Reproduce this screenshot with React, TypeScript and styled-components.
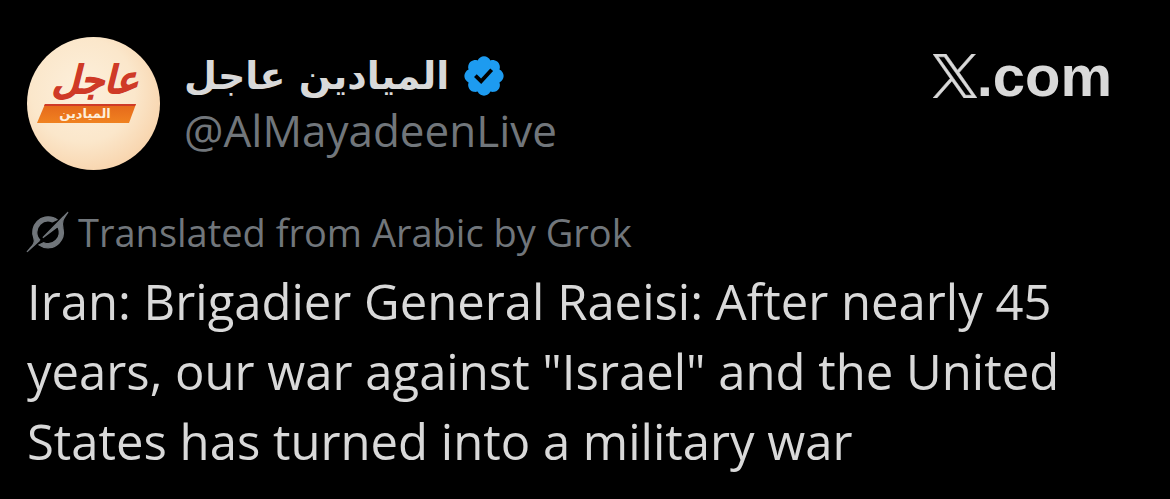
import React from "react";
import styled, { createGlobalStyle } from "styled-components";

const GlobalStyle = createGlobalStyle`
  * { box-sizing: border-box; }
  body {
    margin: 0;
    background: #000;
    color: #d9d9d9;
    font-family: "Open Sans", "DejaVu Sans", sans-serif;
  }
`;

const Post = styled.article`
  padding: 37px 28px 20px 27px;
`;

const Header = styled.header`
  display: flex;
  align-items: flex-start;
  gap: 24px;
  padding-right: 30px;
`;

const Avatar = styled.svg`
  flex: none;
  width: 133px;
  height: 133px;
  border-radius: 50%;
`;

const Author = styled.div`
  flex: 1;
  min-width: 0;
  padding-top: 12px;
`;

const NameRow = styled.div`
  display: flex;
  align-items: center;
  gap: 12px;
  height: 54px;
`;

const Name = styled.h1`
  margin: 0;
  font: 700 38px/54px "DejaVu Sans", sans-serif;
  white-space: nowrap;
`;

const Badge = styled.svg`
  flex: none;
  width: 46px;
  height: 46px;
  fill: #1d9bf0;
`;

const Handle = styled.a`
  display: block;
  color: #71767b;
  font-size: 44px;
  line-height: 54px;
  text-decoration: none;
`;

const Site = styled.a`
  display: flex;
  align-items: flex-end;
  padding-top: 17px;
  color: inherit;
  font: 700 58px/44px "Liberation Sans", sans-serif;
  text-decoration: none;
`;

const XMark = styled.svg`
  width: 44px;
  height: 44px;
  fill: currentColor;
  stroke: currentColor;
  stroke-width: 16;
`;

const Translation = styled.div`
  display: flex;
  align-items: center;
  gap: 10px;
  margin-top: 36px;
  color: #71767b;
  font-size: 38px;
  line-height: 52px;
`;

const GrokMark = styled.svg`
  width: 41px;
  height: 40px;
  fill: currentColor;
  stroke: currentColor;
  stroke-width: 1;
  overflow: visible;
`;

const Body = styled.p`
  margin: 8px 0 0;
  font-size: 49px;
  line-height: 70px;
`;

export default function App() {
  return (
    <>
      <GlobalStyle />
      <Post>
        <Header>
          <Avatar viewBox="0 0 133 133" role="img" aria-label="الميادين عاجل">
            <defs>
              <radialGradient id="cream" cx="42%" cy="40%" r="65%">
                <stop offset="0" stopColor="#fdf0dc" />
                <stop offset="0.6" stopColor="#fbe7cb" />
                <stop offset="1" stopColor="#f8d3ab" />
              </radialGradient>
              <linearGradient id="band" x1="0" y1="0" x2="0" y2="1">
                <stop offset="0" stopColor="#e5671b" />
                <stop offset="1" stopColor="#f08220" />
              </linearGradient>
            </defs>
            <rect width="133" height="133" fill="url(#cream)" />
            <text x="68" y="56" textAnchor="middle" fill="#cf3a27" stroke="#cf3a27" strokeWidth="1" fontFamily="DejaVu Sans" fontWeight="700" fontStyle="italic" fontSize="38">عاجل</text>
            <path d="M18 67H109L102 86H10Z" fill="url(#band)" />
            <path d="M18 67H109L108 69H17Z" fill="#cf3a27" />
            <text x="58" y="81" textAnchor="middle" fill="#fdeedb" fontFamily="DejaVu Sans" fontWeight="700" fontSize="13">الميادين</text>
          </Avatar>
          <Author>
            <NameRow>
              <Name dir="rtl" lang="ar">الميادين عاجل</Name>
              <Badge viewBox="0 0 22 22" role="img" aria-label="Verified account">
                <path d="M20.396 11c-.018-.646-.215-1.275-.57-1.816-.354-.54-.852-.972-1.438-1.246.223-.607.27-1.264.14-1.897-.131-.634-.437-1.218-.882-1.687-.47-.445-1.053-.75-1.687-.882-.633-.13-1.29-.083-1.897.14-.273-.587-.704-1.086-1.245-1.44S11.647 1.62 11 1.604c-.646.017-1.273.213-1.813.568s-.969.854-1.24 1.44c-.608-.223-1.267-.272-1.902-.14-.635.13-1.22.436-1.69.882-.445.47-.749 1.055-.878 1.688-.13.633-.08 1.29.144 1.896-.587.274-1.087.705-1.443 1.245-.356.54-.555 1.17-.574 1.817.02.647.218 1.276.574 1.817.356.54.856.972 1.443 1.245-.224.606-.274 1.263-.144 1.896.13.634.433 1.218.877 1.688.47.443 1.054.747 1.687.878.633.132 1.29.084 1.897-.136.274.586.705 1.084 1.246 1.439.54.354 1.17.551 1.816.569.647-.016 1.276-.213 1.817-.567s.972-.854 1.245-1.44c.604.239 1.266.296 1.903.164.636-.132 1.22-.447 1.68-.907.46-.46.776-1.044.908-1.681s.075-1.299-.165-1.903c.586-.274 1.084-.705 1.439-1.246.354-.54.551-1.17.569-1.816zM9.662 14.85l-3.429-3.428 1.293-1.302 2.072 2.072 4.4-4.794 1.347 1.246z" />
              </Badge>
            </NameRow>
            <Handle href="#profile">@AlMayadeenLive</Handle>
          </Author>
          <Site href="#home">
            <XMark viewBox="0 0 1200 1227" preserveAspectRatio="none" role="img" aria-label="X">
              <path d="M714.163 519.284L1160.89 0H1055.03L667.137 450.887L357.328 0H0L468.492 681.821L0 1226.37H105.866L515.491 750.218L842.672 1226.37H1200L714.137 519.284H714.163ZM569.165 687.828L521.697 619.934L144.011 79.6944H306.615L611.412 515.685L658.88 583.579L1055.08 1150.3H892.476L569.165 687.854V687.828Z" />
            </XMark>
            <span>.com</span>
          </Site>
        </Header>
        <Translation>
          <GrokMark viewBox="0 0 33 32" aria-hidden="true">
            <path d="M12.745 20.54l10.97-8.19c.539-.4 1.307-.244 1.564.38 1.349 3.288.746 7.241-1.938 9.955-2.683 2.714-6.417 3.31-9.83 1.954l-3.728 1.745c5.347 3.697 11.84 2.782 15.898-1.324 3.219-3.255 4.216-7.692 3.284-11.693l.008.009c-1.351-5.878.332-8.227 3.782-13.031L33 0l-4.54 4.59v-.014L12.743 20.544m-2.263 1.987c-3.837-3.707-3.175-9.446.1-12.755 2.42-2.449 6.388-3.448 9.852-1.979l3.72-1.737c-.67-.49-1.53-1.017-2.515-1.387-4.455-1.854-9.789-.931-13.41 2.728-3.483 3.523-4.579 8.94-2.697 13.561 1.405 3.454-.899 5.898-3.22 8.364C1.49 30.2.666 31.074 0 32l10.478-9.466" />
          </GrokMark>
          <span>Translated from Arabic by Grok</span>
        </Translation>
        <Body>
          Iran: Brigadier General Raeisi: After nearly 45 years, our war against "Israel" and the United States has turned into a military war
        </Body>
      </Post>
    </>
  );
}
